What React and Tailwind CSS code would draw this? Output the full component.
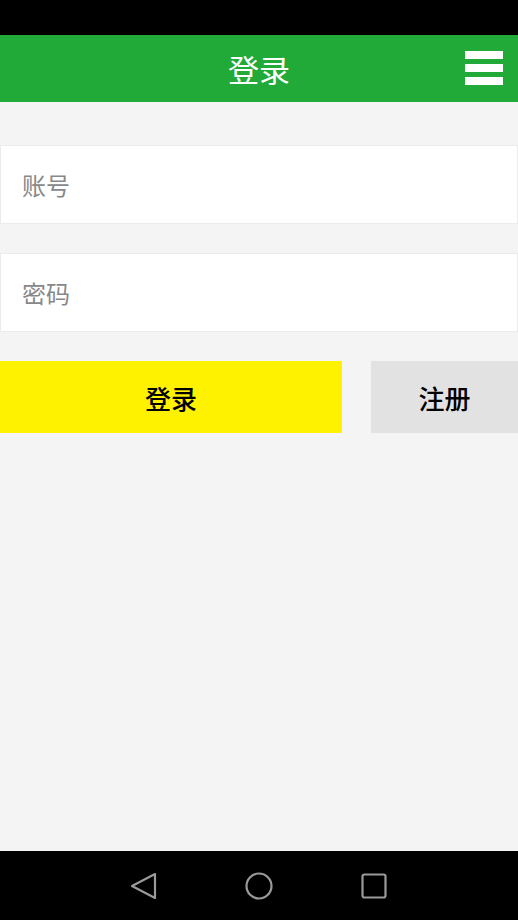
import React from 'react';

const cjk = { fontFamily: '"Noto Sans CJK SC", "Noto Sans", sans-serif' };

function NavBar() {
  return (
    <div className="h-[69px] bg-black flex items-center pl-[130px]">
      <svg width="27" height="28" viewBox="0 0 27 28">
        <path d="M25 2 L2 14 L25 26 Z" fill="none" stroke="#9a9a9a" strokeWidth="2.2" strokeLinejoin="round" />
      </svg>
      <svg className="ml-[88px]" width="28" height="28" viewBox="0 0 28 28">
        <circle cx="14" cy="14" r="12.5" fill="none" stroke="#9a9a9a" strokeWidth="2.2" />
      </svg>
      <svg className="ml-[88px]" width="26" height="26" viewBox="0 0 26 26">
        <rect x="1.5" y="1.5" width="23" height="23" rx="2" fill="none" stroke="#9a9a9a" strokeWidth="2.2" />
      </svg>
    </div>
  );
}

export default function App() {
  return (
    <div className="w-[518px] h-[920px] flex flex-col bg-[#f4f4f4]" style={cjk}>
      <div className="h-[35px] bg-black" />
      <header className="h-[67px] bg-[#22aa38] relative flex items-center justify-center">
        <h1 className="text-white text-[31px] leading-none">登录</h1>
        <div className="absolute right-[15px] top-[16px] flex flex-col gap-[5px]">
          <span className="block w-[38px] h-[8px] bg-white" />
          <span className="block w-[38px] h-[8px] bg-white" />
          <span className="block w-[38px] h-[8px] bg-white" />
        </div>
      </header>

      <main className="flex-1 flex flex-col pt-[43px]">
        <div className="h-[79px] bg-white border border-[#ebebeb] flex items-center px-[21px]">
          <input
            className="w-full outline-none bg-transparent text-[24px] placeholder:text-[#888888]"
            placeholder="账号"
            style={cjk}
          />
        </div>
        <div className="h-[79px] mt-[29px] bg-white border border-[#ebebeb] flex items-center px-[21px]">
          <input
            type="password"
            className="w-full outline-none bg-transparent text-[24px] placeholder:text-[#888888]"
            placeholder="密码"
            style={cjk}
          />
        </div>
        <div className="mt-[29px] flex h-[72px] gap-[29px]">
          <button className="w-[342px] bg-[#fff200] text-black text-[26px] font-medium" style={cjk}>登录</button>
          <button className="flex-1 bg-[#e2e2e2] text-black text-[26px] font-medium" style={cjk}>注册</button>
        </div>
      </main>

      <NavBar />
    </div>
  );
}
